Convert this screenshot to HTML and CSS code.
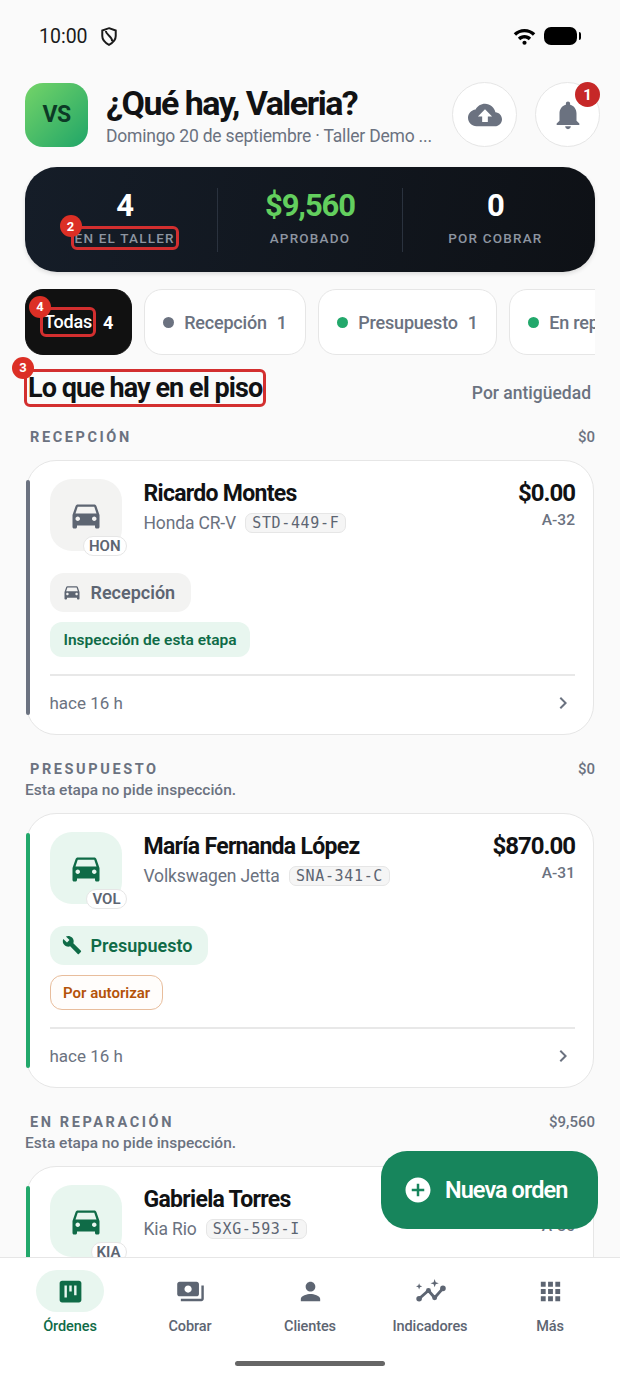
FILE: index.html
```html
<!DOCTYPE html>
<html lang="es">
<head>
  <meta charset="UTF-8" />
  <title>Órdenes</title>
  <link rel="stylesheet" href="styles.css">
</head>
<body>
  <svg class="defs" width="0" height="0">
    <symbol id="i-car" viewBox="0 0 24 24"><path d="M18.92 6.01C18.72 5.42 18.16 5 17.5 5h-11c-.66 0-1.21.42-1.42 1.01L3 12v8c0 .55.45 1 1 1h1c.55 0 1-.45 1-1v-1h12v1c0 .55.45 1 1 1h1c.55 0 1-.45 1-1v-8l-2.08-5.99zM6.5 16c-.83 0-1.5-.67-1.5-1.5S5.67 13 6.5 13s1.5.67 1.5 1.5S7.33 16 6.5 16zm11 0c-.83 0-1.5-.67-1.5-1.5s.67-1.5 1.5-1.5 1.5.67 1.5 1.5-.67 1.5-1.5 1.5zM5 11l1.5-4.5h11L19 11H5z"/></symbol>
    <symbol id="i-wrench" viewBox="0 0 24 24"><path d="M22.7 19l-9.1-9.1c.9-2.3.4-5-1.5-6.9-2-2-5-2.4-7.4-1.3L9 6 6 9 1.6 4.7C.4 7.1.9 10.1 2.9 12.1c1.9 1.9 4.6 2.4 6.9 1.5l9.1 9.1c.4.4 1 .4 1.4 0l2.3-2.3c.5-.4.5-1.1.1-1.4z"/></symbol>
    <symbol id="i-chevron" viewBox="0 0 24 24"><path d="M10 6L8.59 7.41 13.17 12l-4.58 4.59L10 18l6-6z"/></symbol>
  </svg>

  <div class="screen">
    <!-- STATUS BAR -->
    <div class="status">
      <span class="status-time">10:00</span>
      <svg class="status-shield" viewBox="0 0 20 24" fill="none" stroke="#1a1a1a" stroke-width="2.5"><path d="M10 1.500l8.500 3v7c0 5-3.500 8.500-8.500 11-5-2.500-8.500-6-8.500-11v-7z"/><path d="M6 5c0 5 8 6 8 13"/></svg>
      <span class="status-right">
        <svg class="status-wifi" viewBox="0 0 24 18"><path d="M12 1C7.600 1 3.600 2.700.6 5.500l2.500 2.600C5.400 5.900 8.500 4.600 12 4.600s6.600 1.300 8.900 3.500l2.500-2.600C20.400 2.700 16.400 1 12 1z"/><path d="M12 7.500c-2.700 0-5.200 1.100-7 2.800l2.500 2.600c1.200-1.100 2.800-1.800 4.500-1.800s3.300.7 4.500 1.800l2.500-2.600c-1.800-1.700-4.300-2.800-7-2.800z"/><circle cx="12" cy="15.600" r="2.200"/></svg>
        <span class="status-batt"></span>
      </span>
    </div>

    <!-- HEADER -->
    <header class="top">
      <div class="avatar">VS</div>
      <div class="top-text">
        <h1>¿Qué hay, Valeria?</h1>
        <p>Domingo 20 de septiembre · Taller Demo ...</p>
      </div>
      <button class="round-btn">
        <svg viewBox="0 0 24 24"><path d="M19.35 10.04C18.67 6.59 15.64 4 12 4 9.11 4 6.600 5.640 5.350 8.040 2.340 8.360 0 10.910 0 14c0 3.310 2.690 6 6 6h13c2.760 0 5-2.240 5-5 0-2.640-2.050-4.780-4.650-4.960zM14 13v4h-4v-4H7l5-5 5 5h-3z"/></svg>
      </button>
      <button class="round-btn">
        <svg viewBox="0 0 24 24"><path d="M12 22c1.100 0 2-.9 2-2h-4c0 1.100.89 2 2 2zm6-6v-5c0-3.070-1.640-5.640-4.500-6.320V4c0-.83-.67-1.500-1.500-1.500s-1.500.67-1.500 1.500v.68C7.630 5.360 6 7.920 6 11v5l-2 2v1h16v-1l-2-2z"/></svg>
        <span class="bell-count">1</span>
      </button>
    </header>

    <!-- RESUMEN -->
    <section class="stats">
      <div class="stat">
        <strong>4</strong>
        <span class="mark mark-stat"><i class="mark-num">2</i><span class="stat-label">EN EL TALLER</span></span>
      </div>
      <div class="stat">
        <strong class="money">$9,560</strong>
        <span class="stat-label">APROBADO</span>
      </div>
      <div class="stat">
        <strong>0</strong>
        <span class="stat-label">POR COBRAR</span>
      </div>
    </section>

    <!-- FILTROS -->
    <nav class="chips">
      <div class="chip chip-on"><span class="mark mark-chip"><i class="mark-num">4</i>Todas</span><b>4</b></div>
      <div class="chip"><i class="dot dot-gray"></i>Recepción<b>1</b></div>
      <div class="chip"><i class="dot"></i>Presupuesto<b>1</b></div>
      <div class="chip"><i class="dot"></i>En reparación<b>1</b></div>
    </nav>

    <div class="title-row">
      <h2 class="mark mark-title"><i class="mark-num">3</i>Lo que hay en el piso</h2>
      <span class="sort">Por antigüedad</span>
    </div>

    <!-- RECEPCION -->
    <div class="stage stage-first">
      <div class="stage-head"><span>RECEPCIÓN</span><em>$0</em></div>
    </div>
    <article class="order order-gray">
      <div class="order-top">
        <div class="tile"><svg><use href="#i-car"/></svg><span class="brand">HON</span></div>
        <div class="who">
          <h3>Ricardo Montes</h3>
          <p>Honda CR-V <span class="plate">STD-449-F</span></p>
        </div>
        <div class="price"><strong>$0.00</strong><span>A-32</span></div>
      </div>
      <div class="pill"><svg><use href="#i-car"/></svg>Recepción</div>
      <div class="tag tag-green">Inspección de esta etapa</div>
      <div class="order-foot"><span>hace 16 h</span><svg><use href="#i-chevron"/></svg></div>
    </article>

    <!-- PRESUPUESTO -->
    <div class="stage">
      <div class="stage-head"><span>PRESUPUESTO</span><em>$0</em></div>
      <p>Esta etapa no pide inspección.</p>
    </div>
    <article class="order">
      <div class="order-top">
        <div class="tile"><svg><use href="#i-car"/></svg><span class="brand">VOL</span></div>
        <div class="who">
          <h3>María Fernanda López</h3>
          <p>Volkswagen Jetta <span class="plate">SNA-341-C</span></p>
        </div>
        <div class="price"><strong>$870.00</strong><span>A-31</span></div>
      </div>
      <div class="pill"><svg><use href="#i-wrench"/></svg>Presupuesto</div>
      <div class="tag tag-orange">Por autorizar</div>
      <div class="order-foot"><span>hace 16 h</span><svg><use href="#i-chevron"/></svg></div>
    </article>

    <!-- EN REPARACION -->
    <div class="stage">
      <div class="stage-head"><span>EN REPARACIÓN</span><em>$9,560</em></div>
      <p>Esta etapa no pide inspección.</p>
    </div>
    <article class="order">
      <div class="order-top">
        <div class="tile"><svg><use href="#i-car"/></svg><span class="brand">KIA</span></div>
        <div class="who">
          <h3>Gabriela Torres</h3>
          <p>Kia Rio <span class="plate">SXG-593-I</span></p>
        </div>
        <div class="price"><strong>$8,690.00</strong><span>A-30</span></div>
      </div>
    </article>

    <button class="fab">
      <svg viewBox="0 0 24 24"><path d="M12 2C6.480 2 2 6.480 2 12s4.480 10 10 10 10-4.480 10-10S17.520 2 12 2zm5 11h-4v4h-2v-4H7v-2h4V7h2v4h4v2z"/></svg>
      Nueva orden
    </button>

    <!-- TABS -->
    <footer class="tabs">
      <div class="tab tab-on">
        <span class="tab-icon"><svg viewBox="0 0 24 24"><path d="M19 3H5c-1.100 0-2 .9-2 2v14c0 1.100.9 2 2 2h14c1.100 0 2-.9 2-2V5c0-1.100-.9-2-2-2zM9 17H7V7h2v10zm4-5h-2V7h2v5zm4 3h-2V7h2v8z"/></svg></span>
        Órdenes
      </div>
      <div class="tab">
        <span class="tab-icon"><svg viewBox="0 0 24 24"><path d="M19 14V6c0-1.100-.9-2-2-2H3c-1.100 0-2 .9-2 2v8c0 1.100.9 2 2 2h14c1.100 0 2-.9 2-2zm-9-1c-1.660 0-3-1.340-3-3s1.340-3 3-3 3 1.340 3 3-1.340 3-3 3zm13-6v11c0 1.100-.9 2-2 2H4v-2h17V7h2z"/></svg></span>
        Cobrar
      </div>
      <div class="tab">
        <span class="tab-icon"><svg viewBox="0 0 24 24"><path d="M12 12c2.210 0 4-1.790 4-4s-1.790-4-4-4-4 1.790-4 4 1.790 4 4 4zm0 2c-2.670 0-8 1.340-8 4v2h16v-2c0-2.660-5.330-4-8-4z"/></svg></span>
        Clientes
      </div>
      <div class="tab">
        <span class="tab-icon"><svg viewBox="0 0 28 28"><path class="graph-line" d="M3 21l9-8 6 7 8-9"/><circle cx="3" cy="21" r="2.700"/><circle cx="12" cy="13" r="2.400"/><circle cx="18" cy="20" r="2.400"/><circle cx="26" cy="11" r="2.700"/><path d="M18 2l1 3 3 1-3 1-1 3-1-3-3-1 3-1z"/><path d="M3 6l.8 2.200L6 9l-2.200.8L3 12l-.8-2.200L0 9l2.200-.8z"/></svg></span>
        Indicadores
      </div>
      <div class="tab">
        <span class="tab-icon"><svg viewBox="0 0 24 24"><path d="M4 8h4V4H4v4zm6 12h4v-4h-4v4zm-6 0h4v-4H4v4zm0-6h4v-4H4v4zm6 0h4v-4h-4v4zm6-10v4h4V4h-4zm-6 4h4V4h-4v4zm6 6h4v-4h-4v4zm0 6h4v-4h-4v4z"/></svg></span>
        Más
      </div>
      <span class="home-bar"></span>
    </footer>
  </div>
</body>
</html>
```
FILE: styles.css
```css
:root {
  --bg: #fafafa;
  --ink: #111214;
  --muted: #6b7280;
  --line: #e6e6e6;
  --green: #0f6b47;
  --green-2: #22a86b;
  --mint: #e8f6ef;
  --red: #d32f2f;
}
* {
  box-sizing: border-box;
  margin: 0;
  padding: 0;
  font-family: Roboto, "Noto Sans", sans-serif;
}
body {
  background: var(--bg);
}
.defs {
  position: absolute;
}
.screen {
  position: relative;
  width: 620px;
  height: 1380px;
  overflow: hidden;
  background: var(--bg);
}

/* STATUS BAR */
.status {
  display: flex;
  align-items: center;
  height: 72px;
  padding: 0 43px 0 39px;
}
.status-time {
  font-size: 19.5px;
  color: #1a1a1a;
}
.status-shield {
  width: 16px;
  height: 19px;
  margin-left: 13px;
}
.status-right {
  display: flex;
  align-items: center;
  gap: 8px;
  margin-left: auto;
}
.status-wifi {
  width: 23px;
  height: 17px;
  fill: #000;
}
.status-batt {
  position: relative;
  width: 33px;
  height: 18px;
  border-radius: 7px;
  background: #000;
}
.status-batt::after {
  content: "";
  position: absolute;
  right: -4px;
  top: 5px;
  width: 2.500px;
  height: 8px;
  border-radius: 0 2px 2px 0;
  background: #000;
}

/* HEADER */
.top {
  display: flex;
  align-items: center;
  height: 65px;
  margin-top: 10px;
  padding: 0 20px 0 25px;
}
.avatar {
  display: flex;
  align-items: center;
  justify-content: center;
  flex: none;
  width: 63px;
  height: 64px;
  border-radius: 18px;
  background: linear-gradient(135deg, #74d468, #20a568);
  color: #0c3a26;
  font-size: 23px;
  font-weight: 700;
  letter-spacing: -0.5px;
}
.top-text {
  flex: 1;
  min-width: 0;
  margin-left: 18px;
  padding-top: 1px;
}
.top-text h1 {
  font-size: 34px;
  font-weight: 700;
  line-height: 38px;
  letter-spacing: -1.5px;
  color: var(--ink);
}
.top-text p {
  margin-top: 3px;
  font-size: 17.5px;
  line-height: 22px;
  letter-spacing: -0.2px;
  color: var(--muted);
  white-space: nowrap;
}
.round-btn {
  position: relative;
  flex: none;
  display: flex;
  align-items: center;
  justify-content: center;
  width: 65px;
  height: 65px;
  margin-left: 18px;
  border: 1.5px solid var(--line);
  border-radius: 50%;
  background: #fff;
}
.round-btn svg {
  width: 34px;
  height: 34px;
  fill: var(--muted);
}
.bell-count {
  position: absolute;
  top: -1px;
  right: -1px;
  display: flex;
  align-items: center;
  justify-content: center;
  width: 25px;
  height: 25px;
  border-radius: 50%;
  background: #c62828;
  color: #fff;
  font-size: 15px;
  font-weight: 700;
}

/* ANOTACIONES */
.mark {
  position: relative;
  display: inline-block;
  border: 3px solid var(--red);
  border-radius: 6px;
}
.mark-num {
  position: absolute;
  display: flex;
  align-items: center;
  justify-content: center;
  width: 22px;
  height: 22px;
  border-radius: 50%;
  background: #dc2f25;
  color: #fff;
  font-size: 13px;
  font-weight: 700;
  font-style: normal;
  letter-spacing: 0;
}
.mark-stat {
  padding: 0 1px;
  margin-top: 3px;
}
.mark-stat .mark-num {
  top: -14px;
  left: -14px;
}
.mark-chip {
  padding: 0 1px;
  line-height: 24px;
  margin-right: 7px;
}
.mark-chip .mark-num {
  top: -14px;
  left: -14px;
}
.mark-title {
  padding: 0 1px;
}
.mark-title .mark-num {
  top: -15px;
  left: -15px;
}

/* STATS */
.stats {
  display: flex;
  align-items: stretch;
  height: 105px;
  margin: 20px 25px 0;
  padding: 21px 7.5px 20px;
  border-radius: 32px;
  background: linear-gradient(100deg, #151d28, #0e1116);
  box-shadow: 0 2px 4px rgba(0, 0, 0, 0.12);
}
.stat {
  flex: 1;
  display: flex;
  flex-direction: column;
  align-items: center;
  color: #fff;
}
.stat + .stat {
  border-left: 1px solid #2a323e;
}
.stat strong {
  margin-top: 1px;
  font-size: 31px;
  line-height: 34px;
  font-weight: 700;
  letter-spacing: -1.1px;
}
.stat .money {
  color: #63cf5e;
}
.stat-label {
  margin-top: 6px;
  font-size: 13.5px;
  line-height: 18px;
  font-weight: 500;
  letter-spacing: 1.2px;
  color: #8d95a1;
}
.mark-stat .stat-label {
  display: block;
  margin: 0;
}

/* CHIPS */
.chips {
  display: flex;
  gap: 12px;
  height: 66px;
  margin: 17px 25px 0;
  overflow: hidden;
}
.chip {
  flex: none;
  display: flex;
  align-items: center;
  padding: 0 18.5px 0 18px;
  border: 1.5px solid var(--line);
  border-radius: 18px;
  background: #fff;
  color: var(--muted);
  font-size: 18px;
  font-weight: 500;
  letter-spacing: -0.2px;
  white-space: nowrap;
}
.chip b {
  margin-left: 10px;
  font-weight: 500;
}
.chip-on {
  padding: 0 18px 0 14px;
  border-color: #111;
  background: #111;
  color: #fff;
}
.chip-on b {
  margin-left: 0;
  font-weight: 700;
}
.dot {
  width: 11px;
  height: 11px;
  margin-right: 10px;
  border-radius: 50%;
  background: var(--green-2);
}
.dot-gray {
  background: var(--muted);
}

/* TITULO */
.title-row {
  display: flex;
  align-items: center;
  justify-content: space-between;
  height: 38px;
  margin: 14px 29px 0 24px;
}
.title-row h2 {
  font-size: 27px;
  line-height: 32px;
  font-weight: 700;
  letter-spacing: -0.95px;
  color: var(--ink);
}
.sort {
  padding-top: 10px;
  font-size: 17.5px;
  font-weight: 500;
  color: var(--muted);
}

/* ETAPAS */
.stage {
  height: 43px;
  margin: 24px 25px 0;
}
.stage-first {
  height: 22px;
  margin-top: 20px;
}
.stage-head {
  display: flex;
  justify-content: space-between;
  align-items: center;
  height: 20px;
}
.stage-head span {
  padding-left: 5px;
  font-size: 14.5px;
  font-weight: 700;
  letter-spacing: 2.6px;
  color: var(--muted);
}
.stage-head em {
  font-style: normal;
  font-size: 15px;
  font-weight: 500;
  color: var(--muted);
}
.stage p {
  margin-top: 1px;
  font-size: 15.5px;
  line-height: 20px;
  font-weight: 500;
  color: var(--muted);
}

/* TARJETAS */
.order {
  position: relative;
  height: 275px;
  margin: 11px 26px 0;
  padding: 17.5px 18px 0 22.5px;
  border: 1.5px solid var(--line);
  border-radius: 30px;
  background: #fff;
}
.order::before {
  content: "";
  position: absolute;
  left: -1px;
  top: 19px;
  bottom: 19px;
  width: 4px;
  border-radius: 2px;
  background: var(--green-2);
}
.order-gray::before {
  background: var(--muted);
}
.order-top {
  display: flex;
  height: 94px;
}
.tile {
  position: relative;
  flex: none;
  display: flex;
  align-items: center;
  justify-content: center;
  width: 72px;
  height: 72px;
  border-radius: 22px;
  background: var(--mint);
}
.tile svg {
  width: 36px;
  height: 36px;
  fill: var(--green);
}
.order-gray .tile {
  background: #f3f3f2;
}
.order-gray .tile svg {
  fill: #5d6572;
}
.brand {
  position: absolute;
  right: -5px;
  bottom: -5px;
  padding: 0 5px;
  height: 20px;
  border: 1px solid var(--line);
  border-radius: 10px;
  background: #fff;
  color: #5d6572;
  font-size: 15px;
  line-height: 19px;
  font-weight: 600;
}
.who {
  flex: 1;
  margin: 1px 0 0 22px;
}
.who h3 {
  font-size: 23px;
  line-height: 27px;
  font-weight: 700;
  letter-spacing: -0.7px;
  color: var(--ink);
}
.who p {
  margin-top: 5px;
  font-size: 17.5px;
  line-height: 22px;
  letter-spacing: -0.15px;
  color: var(--muted);
}
.plate {
  display: inline-block;
  height: 20px;
  margin-left: 5px;
  padding: 0 6px;
  border: 1px solid var(--line);
  border-radius: 7px;
  background: #f5f5f5;
  color: #5d6572;
  font-family: "DejaVu Sans Mono", monospace;
  font-size: 15px;
  line-height: 18px;
  letter-spacing: 0.65px;
  vertical-align: 1px;
}
.price {
  display: flex;
  flex-direction: column;
  align-items: flex-end;
  margin-top: 1px;
}
.price strong {
  font-size: 24px;
  line-height: 27px;
  font-weight: 700;
  letter-spacing: -1px;
  color: var(--ink);
}
.price span {
  margin-top: 4px;
  font-size: 15.5px;
  line-height: 18px;
  font-weight: 500;
  color: var(--muted);
}
.pill {
  display: flex;
  align-items: center;
  gap: 9px;
  width: fit-content;
  height: 39px;
  padding: 0 16px 0 12px;
  border-radius: 14px;
  background: var(--mint);
  color: var(--green);
  font-size: 18px;
  font-weight: 600;
}
.pill svg {
  width: 20px;
  height: 20px;
  fill: currentColor;
}
.order-gray .pill {
  background: #f3f3f2;
  color: #5d6572;
}
.tag {
  display: flex;
  align-items: center;
  width: fit-content;
  height: 35px;
  margin-top: 10px;
  padding: 2px 13px 0 14px;
  border-radius: 12px;
  font-size: 15.5px;
  font-weight: 600;
}
.tag-green {
  background: var(--mint);
  color: var(--green);
}
.tag-orange {
  padding: 2px 12px 0 12.5px;
  border: 1.5px solid #e8bd9c;
  background: #fffdfb;
  color: #b45309;
  font-size: 15px;
}
.order-foot {
  display: flex;
  align-items: center;
  justify-content: space-between;
  height: 56px;
  margin-top: 17px;
  border-top: 2px solid #e8e8e8;
  color: var(--muted);
  font-size: 17px;
}
.order-foot svg {
  width: 24px;
  height: 24px;
  fill: var(--muted);
}

/* FAB */
.fab {
  position: absolute;
  top: 1151px;
  left: 381px;
  display: flex;
  align-items: center;
  width: 217px;
  height: 78px;
  padding-left: 22px;
  gap: 12px;
  border: 0;
  border-radius: 26px;
  background: #17855c;
  color: #fff;
  font-size: 23.5px;
  font-weight: 600;
  letter-spacing: -0.95px;
}
.fab svg {
  width: 30px;
  height: 30px;
  fill: #fff;
}

/* TABS */
.tabs {
  position: absolute;
  left: 0;
  right: 0;
  bottom: 0;
  display: flex;
  height: 123px;
  padding: 12px 10px 0;
  border-top: 1.5px solid var(--line);
  background: #fff;
}
.tab {
  flex: 1;
  display: flex;
  flex-direction: column;
  align-items: center;
  color: #5d6572;
  font-size: 14.5px;
  font-weight: 500;
  letter-spacing: -0.1px;
}
.tab-icon {
  display: flex;
  align-items: center;
  justify-content: center;
  width: 68px;
  height: 42px;
  margin-bottom: 6px;
  border-radius: 21px;
}
.tab-icon svg {
  width: 29px;
  height: 29px;
  fill: #5d6572;
  overflow: visible;
}
.graph-line {
  fill: none;
  stroke: #5d6572;
  stroke-width: 2.8;
}
.tab-on {
  color: var(--green);
}
.tab-on .tab-icon {
  background: var(--mint);
}
.tab-on .tab-icon svg {
  fill: var(--green);
}
.home-bar {
  position: absolute;
  left: 235px;
  bottom: 14px;
  width: 150px;
  height: 5px;
  border-radius: 3px;
  background: #666;
}
```
